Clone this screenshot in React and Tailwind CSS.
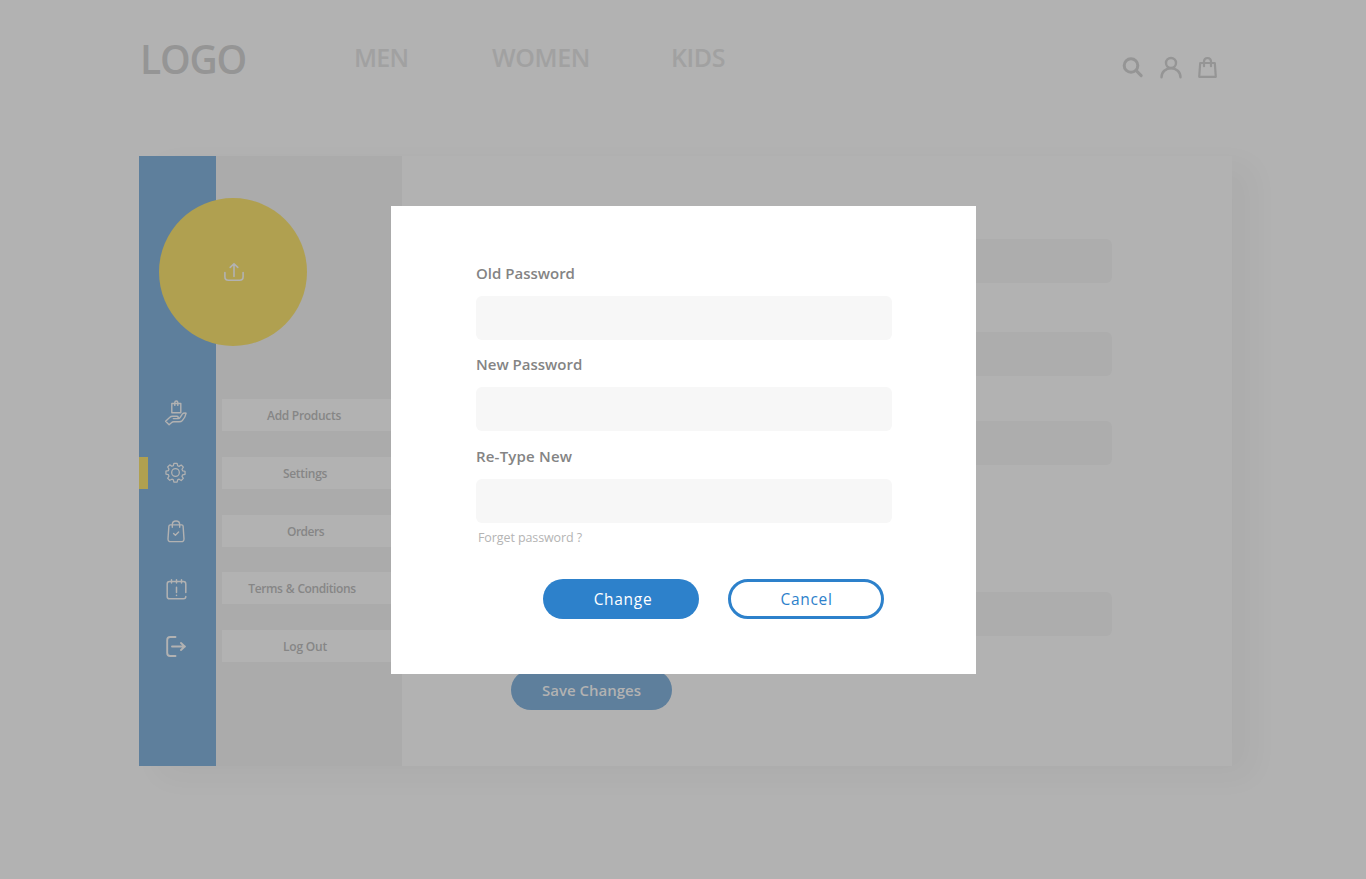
import React from "react";

const FONT = "font-['Open_Sans','Noto_Sans',sans-serif]";

function HandBagIcon() {
  return (
    <svg width="24" height="26" viewBox="0 0 24 26" fill="none" stroke="currentColor" strokeWidth="1.4" strokeLinejoin="round" strokeLinecap="round">
      <path d="M7.800 3.500h9v9.300h-9z" />
      <path d="M10.800 5.400V2.400c0-.8.7-1.400 1.500-1.400s1.500.6 1.500 1.400v3" />
      <path d="M9.300 18.600h3.800c1.500 0 1.500-2.300 0-2.300H8.600c-1.200 0-2.100.3-3 1.200L1.600 21.200l3.500 3.600 2.300-2.100c.7-.7 1.400-1 2.400-1h5.400c1.300 0 2.300-.4 3.200-1.300 1.600-1.700 3.200-4.200 3.700-7.300-1.800-.2-3.200.2-3.800 1l-2.100 3.200c-.5.9-1.200 1.300-2.100 1.300h-1" />
    </svg>
  );
}

function GearIcon() {
  return (
    <svg width="21" height="21" viewBox="0 0 22 22" fill="none" stroke="currentColor" strokeWidth="1.3" strokeLinejoin="round">
      <circle cx="11" cy="11" r="4" />
      <path d="M9.300 1.400h3.400l.5 2.500 1.600.7 2.200-1.400 2.200 2.200-1.400 2.200.7 1.700 2.500.4v3.200l-2.500.5-.7 1.600 1.400 2.200-2.200 2.200-2.200-1.400-1.600.7-.5 2.400H9.300l-.5-2.400-1.600-.7L5 19.200 2.800 17l1.400-2.200-.7-1.600-2.500-.5V9.500l2.500-.4.7-1.700L2.800 5.200 5 3l2.200 1.500 1.600-.7z" />
    </svg>
  );
}

function OrderIcon() {
  return (
    <svg width="18" height="23" viewBox="0 0 18 23" fill="none" stroke="currentColor" strokeWidth="1.400" strokeLinejoin="round" strokeLinecap="round">
      <path d="M3.200 4.900h11.600c.7 0 1.200.5 1.300 1.200l.9 12.800c.1 1.700-1 2.700-2.700 2.700H3.700C2 21.600.9 20.600 1 18.900l.9-12.800c.1-.7.600-1.200 1.300-1.200z" />
      <path d="M5.300 7.300V4.700C5.300 2.600 6.900 1 9 1s3.700 1.600 3.700 3.700v2.600M6.600 13.600l1.800 1.700 3.200-3.200" />
    </svg>
  );
}

function TermsIcon() {
  return (
    <svg width="21" height="21" viewBox="0 0 21 21" fill="none" stroke="currentColor" strokeWidth="1.500" strokeLinecap="round">
      <path d="M19.800 13.500V5c0-1.500-.8-2.400-2.300-2.400h-14C2 2.600 1.200 3.500 1.200 5v12.400c0 1.500.8 2.400 2.300 2.400h14c1.500 0 2.300-.8 2.300-2.300M5.500.8v3.300M10.500.8v3.300M15.500.8v3.300M10.500 8.300v5.200M10.500 16.200v.3" />
    </svg>
  );
}

function LogoutIcon() {
  return (
    <svg width="21" height="21" viewBox="0 0 21 21" fill="none" stroke="currentColor" strokeWidth="1.900" strokeLinecap="round" strokeLinejoin="round">
      <path d="M9.500 1H4.200C2.200 1 1.200 2 1.200 4v13c0 2 1 3 3 3h5.300M6 10.500h13M15 7l3.700 3.500L15 14" />
    </svg>
  );
}

const MENU = [
  { label: "Add Products", row: "mt-[53px] pr-[16px] tracking-[-0.3px]" },
  { label: "Settings", row: "mt-[26px] pr-[14px] tracking-[-0.3px]" },
  { label: "Orders", row: "mt-[26px] pr-[13px] tracking-[-0.5px]" },
  { label: "Terms & Conditions", row: "mt-[25px] pr-[20px] tracking-[-0.4px] [word-spacing:0.5px]" },
  { label: "Log Out", row: "mt-[26px] pr-[14px] tracking-[-0.2px]" },
];

function Field({ label, className }) {
  return (
    <label className={`block ${className}`}>
      <span className="block h-[22px] text-[15px] leading-[22px] font-semibold text-[#848484] whitespace-nowrap">{label}</span>
      <input type="password" className="mt-[12px] block h-[44px] w-full rounded-[6px] bg-[#f7f7f7] px-3 outline-none" />
    </label>
  );
}

function Header() {
  return (
    <header className="flex h-[156px] items-start pl-[140px] font-semibold whitespace-nowrap">
      <h1 className="mt-[32px] w-[214px] text-[39px] leading-[54px] tracking-[-1.2px] text-[#959595]">LOGO</h1>
      <nav className="mt-[40px] flex text-[25px] leading-[34px] tracking-[-0.4px] text-[#a1a1a1]">
        <a className="w-[138px] tracking-[-0.8px]">MEN</a>
        <a className="w-[179px]">WOMEN</a>
        <a className="w-[449px]">KIDS</a>
      </nav>
      <div className="mt-[56px] flex text-[#959595]">
        <svg width="24" height="24" viewBox="0 0 24 24" fill="none" stroke="currentColor" strokeWidth="3" strokeLinecap="round">
          <circle cx="11" cy="9.500" r="6.800" />
          <path d="M16.200 14.600l5 5" />
        </svg>
        <svg className="ml-[16px]" width="22" height="24" viewBox="0 0 22 24" fill="none" stroke="currentColor" strokeWidth="2.400" strokeLinecap="round">
          <circle cx="11" cy="7" r="5" />
          <path d="M1.500 21.200C1.500 16 5.700 12.200 11 12.200s9.500 3.800 9.500 9" />
        </svg>
        <svg className="ml-[15px]" width="20" height="24" viewBox="0 0 20 24" fill="none" stroke="currentColor" strokeWidth="2.200" strokeLinejoin="round" strokeLinecap="round">
          <path d="M3.200 7h14.600l1 13.800H2.200zM7 10.200V5.600C7 3.500 8.400 2 10.500 2S14 3.500 14 5.600v4.600" />
        </svg>
      </div>
    </header>
  );
}

function Sidebar() {
  return (
    <>
      <div className="flex w-[77px] flex-col bg-[#5e7f9c] pt-[244px] text-[#b2b2b2]">
        <div className="flex h-[26px] justify-center pr-[3px]"><HandBagIcon /></div>
        <div className="mt-[31px] flex h-[32px] items-center">
          <span className="h-[32px] w-[9px] bg-[#b0a050]" />
          <span className="ml-[17px] pb-px"><GearIcon /></span>
        </div>
        <div className="mt-[31px] flex h-[23px] justify-center pr-[3px]"><OrderIcon /></div>
        <div className="mt-[36px] flex h-[21px] justify-center pr-[2px]"><TermsIcon /></div>
        <div className="mt-[36px] flex h-[21px] justify-center pr-[2px]"><LogoutIcon /></div>
      </div>
      <div className="w-[186px] bg-[#ababab] pl-[6px]">
        <div className="relative h-[190px]">
          <div className="absolute top-[42px] -left-[63px] flex h-[148px] w-[148px] items-center justify-center rounded-full bg-[#b0a050] text-[#b2b2b2]">
            <svg width="22" height="20" viewBox="0 0 22 20" fill="none" stroke="currentColor" strokeWidth="1.600" strokeLinecap="round" strokeLinejoin="round" className="ml-px">
              <path d="M1.900 10.500v4.300c0 2.200 1.300 3.500 3.500 3.500h11.200c2.200 0 3.500-1.300 3.500-3.500v-4.300M11 14.500V1.700M7.200 5.400L11 1.700l3.800 3.700" />
            </svg>
          </div>
        </div>
        {MENU.map((m) => (
          <div key={m.label} className={`flex h-[32px] items-center justify-center bg-[#b2b2b2] pt-px text-[12px] font-semibold whitespace-nowrap text-[#868686] ${m.row}`}>
            {m.label}
          </div>
        ))}
      </div>
    </>
  );
}

export default function App() {
  return (
    <div className={`relative h-[879px] w-[1366px] overflow-hidden bg-[#b2b2b2] ${FONT}`}>
      <Header />
      <main className="ml-[139px] flex h-[610px] w-[1093px] bg-[#b2b2b2] shadow-[20px_10px_30px_rgba(0,0,0,0.035)]">
        <Sidebar />
        <section className="flex-1 pt-[83px] pl-[109px]">
          <div className="h-[44px] w-[601px] rounded-[6px] bg-[#adadad]" />
          <div className="mt-[49px] h-[44px] w-[601px] rounded-[6px] bg-[#adadad]" />
          <div className="mt-[45px] h-[44px] w-[601px] rounded-[6px] bg-[#adadad]" />
          <div className="mt-[127px] h-[44px] w-[601px] rounded-[6px] bg-[#adadad]" />
          <button className="mt-[34px] flex h-[40px] w-[161px] items-center justify-center rounded-full bg-[#5e7f9c] text-[15px] font-semibold text-[#b2b2b2]">
            Save Changes
          </button>
        </section>
      </main>
      <div role="dialog" className="absolute top-[206px] left-[391px] h-[468px] w-[585px] bg-white pt-[56px] pr-[84px] pl-[85px]">
        <Field label="Old Password" className="" />
        <Field label="New Password" className="mt-[13px]" />
        <Field label="Re-Type New" className="mt-[14px] tracking-[0.2px]" />
        <a className="mt-[5px] ml-[2px] block h-[20px] text-[12.500px] leading-[20px] tracking-[-0.1px] text-[#b4b4b4]">Forget password ?</a>
        <div className="mt-[31px] flex gap-[29px] pl-[67px] text-[15.500px] tracking-[0.7px]">
          <button className="h-[40px] w-[156px] shrink-0 rounded-full bg-[#2d81cb] pt-[2px] pl-[4px] text-white">Change</button>
          <button className="h-[40px] w-[156px] shrink-0 rounded-full border-[3px] border-[#2d81cb] pt-[2px] pl-[1px] text-[#2d81cb]">Cancel</button>
        </div>
      </div>
    </div>
  );
}
